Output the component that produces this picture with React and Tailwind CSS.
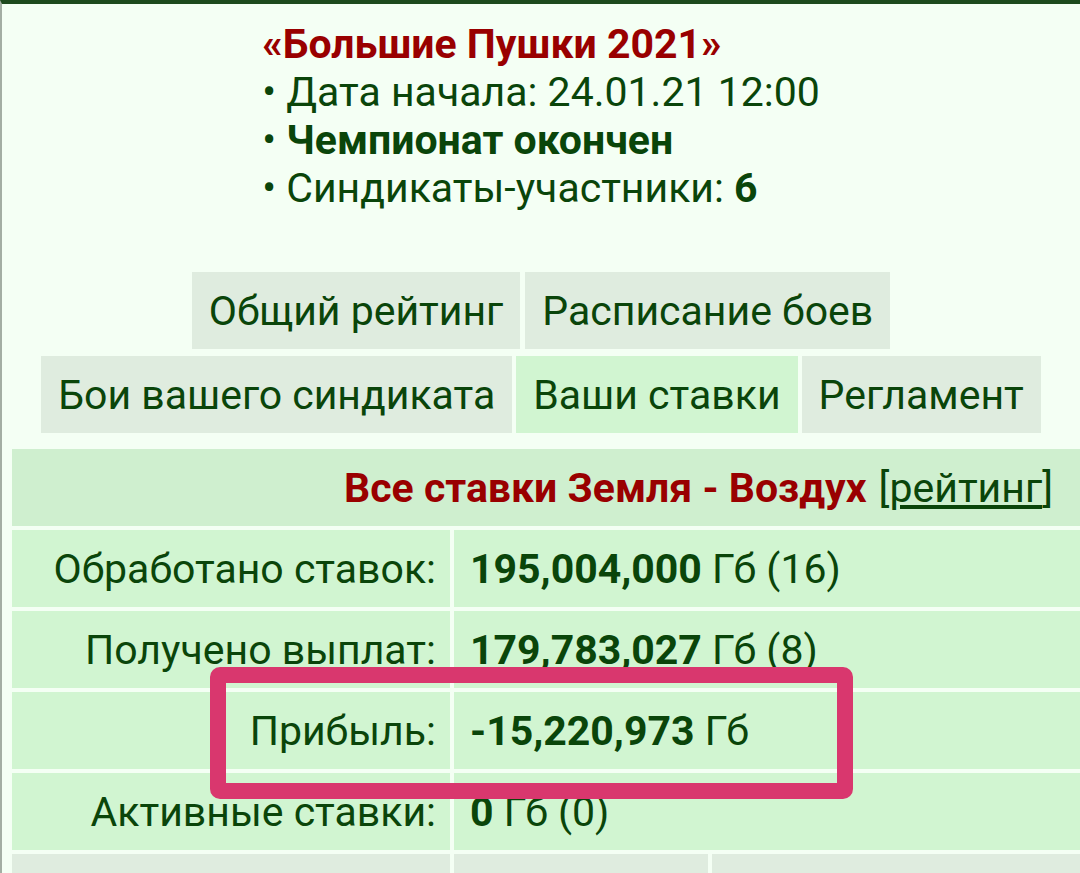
import React from 'react'

const green = 'text-[#0a450a]'

function Tab({children, active}){
  return (
    <div className={`h-[77px] px-[17px] flex items-center justify-center ${active ? 'bg-[#d1f5d1]' : 'bg-[#dfecdf]'}`}>
      {children}
    </div>
  )
}

function Row({label, children}){
  return (
    <div className="flex gap-[4px] h-[77px]">
      <div className="w-[438px] shrink-0 bg-[#d1f5d1] flex items-center justify-end pr-[14px]">{label}</div>
      <div className="flex-1 bg-[#d1f5d1] flex items-center pl-[16px]">{children}</div>
    </div>
  )
}

export default function App(){
  return (
    <div className={`relative h-[873px] overflow-hidden bg-[#f4fff4] border-t-4 border-t-[#1d4a1d] border-l-2 border-l-[#a3aea3] ${green} text-[41px] leading-[48px]`} style={{fontFamily: 'Roboto, "Noto Sans", sans-serif'}}>
      <div className="flex justify-center pt-[16px]">
        <div>
          <div className="font-bold text-[#990000]">«Большие Пушки 2021»</div>
          <div>• Дата начала: 24.01.21 12:00</div>
          <div>• <b>Чемпионат окончен</b></div>
          <div>• Синдикаты-участники: <b>6</b></div>
        </div>
      </div>

      <div className="mt-[60px] flex flex-col items-center gap-[7px]">
        <div className="flex gap-[5px]">
          <Tab>Общий рейтинг</Tab>
          <Tab>Расписание боев</Tab>
        </div>
        <div className="flex gap-[4px]">
          <Tab>Бои вашего синдиката</Tab>
          <Tab active>Ваши ставки</Tab>
          <Tab>Регламент</Tab>
        </div>
      </div>

      <div className="ml-[10px] mt-[16px] w-[1100px] flex flex-col gap-[4px]">
        <div className="h-[77px] bg-[#cfefcf] flex items-center justify-end pr-[59px]">
          <span className="font-bold text-[#990000]">Все ставки Земля - Воздух</span>
          <span className="ml-[12px]">[<span className="underline underline-offset-[3px]">рейтинг</span>]</span>
        </div>
        <Row label="Обработано ставок:"><b>195,004,000</b>&nbsp;Гб (16)</Row>
        <Row label="Получено выплат:"><b>179,783,027</b>&nbsp;Гб (8)</Row>
        <Row label="Прибыль:"><b>-15,220,973</b>&nbsp;Гб</Row>
        <Row label="Активные ставки:"><b>0</b>&nbsp;Гб (0)</Row>
        <div className="flex gap-[4px] h-[77px]">
          <div className="w-[438px] shrink-0 bg-[#dfecdf]"></div>
          <div className="w-[254px] shrink-0 bg-[#dfecdf]"></div>
          <div className="flex-1 bg-[#dfecdf]"></div>
        </div>
      </div>

      {/* highlight frame around the profit row */}
      <div className="absolute left-[208px] top-[663px] w-[643px] h-[132px] border-[16px] border-[#d9376e] rounded-[10px]"></div>
    </div>
  )
}
